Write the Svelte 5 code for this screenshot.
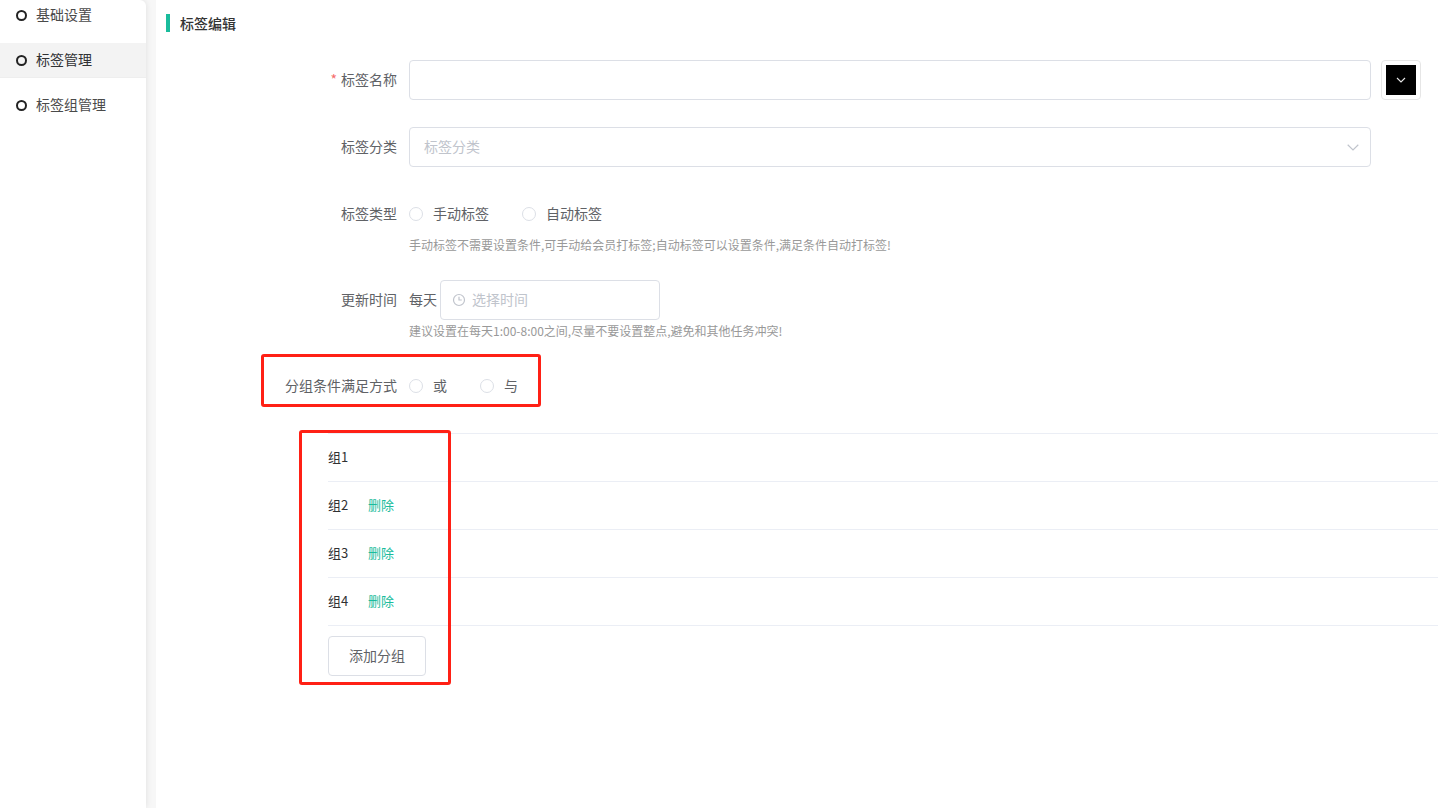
<script>
  const groups = [
    { name: '组1', removable: false },
    { name: '组2', removable: true },
    { name: '组3', removable: true },
    { name: '组4', removable: true }
  ];
  const menu = ['基础设置', '标签管理', '标签组管理'];
</script>

<div class="page">
  <aside class="side">
    <ul class="menu">
      {#each menu as item, i}
        <li class:active={i === 1}><span class="dot"></span><span class="txt">{item}</span></li>
      {/each}
    </ul>
  </aside>

  <main class="main">
    <h2 class="title">标签编辑</h2>

    <div class="row">
      <div class="label"><span class="req">*</span>标签名称</div>
      <div class="input grow"></div>
      <div class="swatch"><span class="swatch-in">
        <svg width="10" height="6" viewBox="0 0 10 6"><path d="M1 1l4 4 4-4" fill="none" stroke="#e8e8e8" stroke-width="1.1"/></svg>
      </span></div>
    </div>

    <div class="row">
      <div class="label">标签分类</div>
      <div class="input grow select">
        <span class="ph">标签分类</span>
        <svg width="12" height="7" viewBox="0 0 12 7"><path d="M.7.8L6 6l5.3-5.2" fill="none" stroke="#c0c4cc" stroke-width="1.2"/></svg>
      </div>
      <div class="spacer"></div>
    </div>

    <div class="row tight">
      <div class="label">标签类型</div>
      <div class="radios">
        <label class="radio"><i></i><span class="txt">手动标签</span></label>
        <label class="radio"><i></i><span class="txt">自动标签</span></label>
      </div>
    </div>
    <p class="help">手动标签不需要设置条件,可手动给会员打标签;自动标签可以设置条件,满足条件自动打标签!</p>

    <div class="row tight">
      <div class="label">更新时间</div>
      <span class="every">每天</span>
      <div class="input time">
        <svg width="14" height="14" viewBox="0 0 14 14"><circle cx="7" cy="7" r="5.5" fill="none" stroke="#c0c4cc" stroke-width="1.2"/><path d="M7 3.8V7h2.8" fill="none" stroke="#c0c4cc" stroke-width="1.2"/></svg>
        <span class="ph">选择时间</span>
      </div>
    </div>
    <p class="help">建议设置在每天1:00-8:00之间,尽量不要设置整点,避免和其他任务冲突!</p>

    <div class="row">
      <div class="label">分组条件满足方式</div>
      <div class="radios">
        <label class="radio"><i></i><span class="txt">或</span></label>
        <label class="radio"><i></i><span class="txt">与</span></label>
      </div>
    </div>

    <div class="groups">
      {#each groups as g}
        <div class="group">
          <span class="gname">{g.name}</span>
          {#if g.removable}<a class="del" href="#del">删除</a>{/if}
        </div>
      {/each}
      <button class="add" type="button">添加分组</button>
    </div>

    <div class="mark mark-a"></div>
    <div class="mark mark-b"></div>
  </main>
</div>

<style>
  :global(body) {
    margin: 0;
    background: #f7f7f7;
    font-family: "Noto Sans CJK SC", "Liberation Sans", sans-serif;
  }
  .page {
    display: flex;
    height: 808px;
    overflow: hidden;
    color: #606266;
    font-size: 14px;
    background: #f7f7f7;
  }
  .side {
    flex: none;
    width: 146px;
    background: #fff;
    border-top-right-radius: 6px;
    box-shadow: 0 0 6px rgba(0, 0, 0, 0.1);
    position: relative;
    z-index: 1;
  }
  .menu {
    list-style: none;
    margin: -2px 0 0;
    padding: 0;
    display: flex;
    flex-direction: column;
    gap: 10px;
  }
  .menu li {
    height: 35px;
    display: flex;
    align-items: center;
    padding-left: 15.5px;
    box-sizing: border-box;
    color: #4a4a4a;
  }
  .menu li.active {
    background: #f3f3f3;
    color: #303133;
    box-shadow: inset 0 -1px 0 #eee;
  }
  .menu .txt {
    padding-bottom: 4px;
  }
  .txt {
    padding-bottom: 2px;
  }
  .dot {
    width: 11px;
    height: 11px;
    box-sizing: border-box;
    border: 2px solid #222;
    border-radius: 50%;
    margin-right: 9.5px;
  }
  .main {
    flex: 1;
    position: relative;
    margin-left: 10px;
    background: #fff;
    padding-top: 14px;
  }
  .title {
    margin: 0 0 28px 10px;
    height: 18px;
    border-left: 4px solid #1abc9c;
    padding-left: 10px;
    font-size: 14px;
    font-weight: 500;
    line-height: 18px;
    color: #333;
  }
  .row {
    display: flex;
    align-items: center;
    min-height: 40px;
    margin-bottom: 27px;
    padding-right: 17px;
  }
  .row.tight {
    margin-bottom: 0;
  }
  .label {
    flex: none;
    width: 241px;
    margin-right: 12px;
    padding-bottom: 2px;
    text-align: right;
    white-space: nowrap;
  }
  .req {
    color: #f56c6c;
    margin-right: 4px;
  }
  .input {
    box-sizing: border-box;
    height: 40px;
    border: 1px solid #dcdfe6;
    border-radius: 4px;
    background: #fff;
  }
  .grow {
    flex: 1;
  }
  .select {
    display: flex;
    align-items: center;
    justify-content: space-between;
    padding: 0 11px 0 14px;
  }
  .ph {
    color: #c0c4cc;
    padding-bottom: 2px;
  }
  .swatch {
    flex: none;
    box-sizing: border-box;
    width: 40px;
    height: 40px;
    margin-left: 10px;
    padding: 4px;
    border: 1px solid #e6e6e6;
    border-radius: 4px;
  }
  .swatch-in {
    display: flex;
    align-items: center;
    justify-content: center;
    width: 100%;
    height: 100%;
    background: #000;
  }
  .spacer {
    flex: none;
    width: 50px;
  }
  .radios {
    display: flex;
    gap: 33px;
  }
  .radio {
    display: flex;
    align-items: center;
  }
  .radio i {
    box-sizing: border-box;
    width: 14px;
    height: 14px;
    border: 1px solid #dcdfe6;
    border-radius: 50%;
    margin-right: 10px;
  }
  .help {
    margin: 0 0 22px 253px;
    padding-bottom: 2px;
    font-size: 12px;
    line-height: 22px;
    color: #999;
  }
  .every {
    margin-right: 3px;
    padding-bottom: 2px;
  }
  .time {
    width: 220px;
    display: flex;
    align-items: center;
    padding-left: 11px;
    gap: 6px;
  }
  .groups {
    margin: 0 0 0 172px;
    border-top: 1px solid #ebeef5;
    font-size: 13px;
  }
  .group {
    box-sizing: border-box;
    height: 48px;
    padding-bottom: 2px;
    display: flex;
    align-items: center;
    border-bottom: 1px solid #ebeef5;
    color: #303133;
  }
  .gname {
    width: 40px;
  }
  .del {
    color: #1abc9c;
    text-decoration: none;
  }
  .add {
    display: block;
    box-sizing: border-box;
    width: 98px;
    height: 40px;
    margin-top: 10px;
    padding: 0 0 2px;
    background: #fff;
    border: 1px solid #dcdfe6;
    border-radius: 4px;
    font-family: inherit;
    font-size: 14px;
    color: #606266;
  }
  .mark {
    position: absolute;
    box-sizing: border-box;
    border: 3px solid #ff2015;
    border-radius: 3px;
    pointer-events: none;
  }
  .mark-a {
    left: 105px;
    top: 354px;
    width: 280px;
    height: 53px;
  }
  .mark-b {
    left: 143px;
    top: 430px;
    width: 152px;
    height: 255px;
  }
</style>
